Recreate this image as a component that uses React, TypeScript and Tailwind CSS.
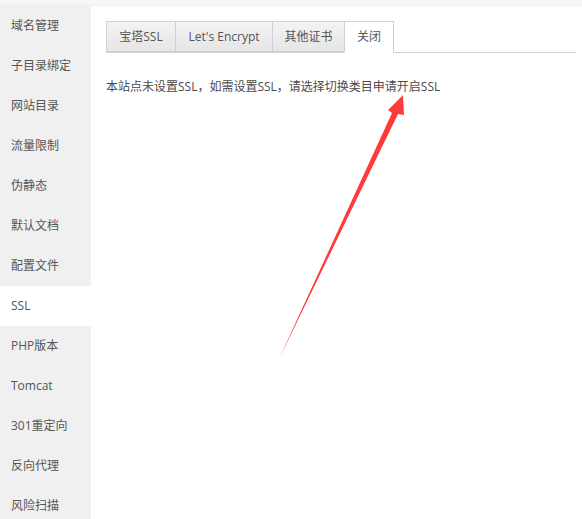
const menu = [
    '域名管理',
    '子目录绑定',
    '网站目录',
    '流量限制',
    '伪静态',
    '默认文档',
    '配置文件',
    'SSL',
    'PHP版本',
    'Tomcat',
    '301重定向',
    '反向代理',
    '风险扫描',
];

const tabs = [
    { name: '宝塔SSL', w: 'w-[70px]' },
    { name: "Let's Encrypt", w: 'w-[98px]' },
    { name: '其他证书', w: 'w-[73px]' },
    { name: '关闭', w: 'w-[50px]' },
];

export default function App() {
    const active = 'SSL';
    const activeTab = '关闭';

    return (
        <div
            className="w-[582px] h-[519px] overflow-hidden bg-white text-[12px] text-[#555]"
            style={{ fontFamily: '"Open Sans", "Noto Sans CJK SC", sans-serif' }}
        >
            <div className="h-[6px] bg-[#f6f6f6] border-b border-[#efefef]" />
            <div className="flex h-[513px]">
                <div className="w-[91px] shrink-0 bg-[#f0f0f0]">
                    {menu.map(item => (
                        <div
                            key={item}
                            className={`h-[40px] flex items-center pl-[11px] ${item === active ? 'bg-white' : ''}`}
                        >
                            {item}
                        </div>
                    ))}
                </div>
                <div className="relative flex-1 pl-[15px] pr-[6px] pt-[15px]">
                    <div className="flex border-b border-[#cfcfdc] h-[32px]">
                        {tabs.map(tab => (
                            <div
                                key={tab.name}
                                className={`${tab.w} flex items-center justify-center border border-[#cfcfdc] -ml-px first:ml-0 ${
                                    tab.name === activeTab
                                        ? 'bg-white border-b-white h-[32px]'
                                        : 'bg-gradient-to-b from-[#f3f3f3] to-[#e6e6e6] h-[31px]'
                                }`}
                            >
                                {tab.name}
                            </div>
                        ))}
                    </div>
                    <p className="mt-[25px] text-[#4a4a4a]">
                        本站点未设置SSL，如需设置SSL，请选择切换类目申请开启SSL
                    </p>
                    <svg
                        className="absolute left-0 top-0 pointer-events-none"
                        width="491"
                        height="513"
                        viewBox="91 6 491 513"
                    >
                        <polygon
                            points="279,359 392,113 388,110 403,95 404,115 398,114"
                            fill="#ff3a3a"
                        />
                    </svg>
                </div>
            </div>
        </div>
    );
}
